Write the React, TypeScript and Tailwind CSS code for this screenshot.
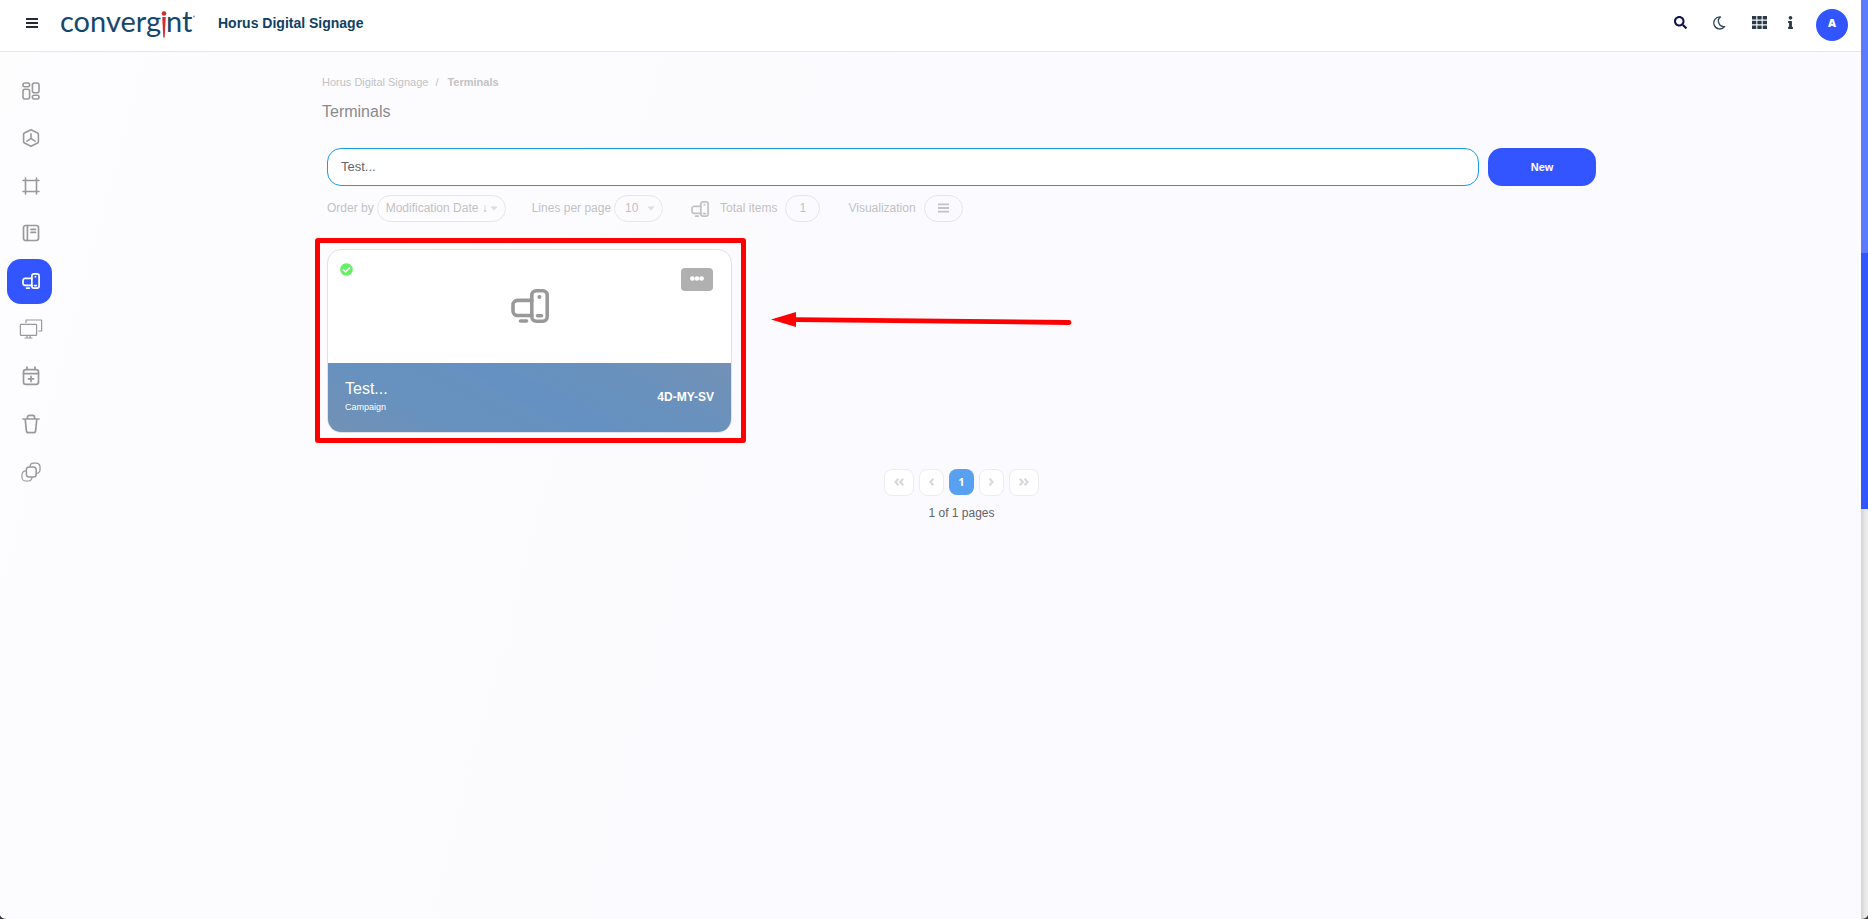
import React, { useState } from "react";
import { FaCheckCircle, FaInfo, FaSearch } from "react-icons/fa";

type IconProps = { className?: string };

interface Terminal {
  name: string;
  kind: string;
  code: string;
}

const terminals: Terminal[] = [{ name: "Test...", kind: "Campaign", code: "4D-MY-SV" }];

const stroke = {
  fill: "none",
  stroke: "currentColor",
  strokeLinecap: "round" as const,
  strokeLinejoin: "round" as const,
};

function DevicesIcon({ className }: IconProps) {
  return (
    <svg className={className} viewBox="0 0 38 34" {...stroke} strokeWidth="3.6" aria-hidden="true">
      <path d="M21 11.4H6.500a4.500 4.500 0 0 0-4.500 4.500V22a4.500 4.500 0 0 0 4.500 4.500H21" />
      <rect x="20.800" y="1.800" width="15.400" height="30.400" rx="4.400" />
      <path d="M9.500 32h6" />
      <path d="M26.400 26.800h4.200" strokeWidth="3.400" />
      <path d="M28.400 8h.02" strokeWidth="4" />
    </svg>
  );
}

function DashboardIcon({ className }: IconProps) {
  return (
    <svg className={className} viewBox="0 0 18 18" {...stroke} strokeWidth="1.600" aria-hidden="true">
      <rect x="1" y="1" width="6.600" height="3.800" rx="1.700" />
      <rect x="1" y="7.200" width="6.600" height="9.800" rx="2" />
      <rect x="10.400" y="1" width="6.600" height="9.800" rx="2" />
      <rect x="10.400" y="13.200" width="6.600" height="3.800" rx="1.700" />
    </svg>
  );
}

function HexagonIcon({ className }: IconProps) {
  return (
    <svg className={className} viewBox="0 0 18 18" {...stroke} strokeWidth="1.600" aria-hidden="true">
      <path d="M9 .8 15.600 4a1.400 1.400 0 0 1 .8 1.200v7.600a1.400 1.400 0 0 1-.8 1.200L9 17.200 2.400 14a1.400 1.400 0 0 1-.8-1.200V5.200A1.400 1.400 0 0 1 2.400 4Z" />
      <path d="M9 4.800v4.600M9 9.400l-4 2.800M9 9.400l4 2.800" />
    </svg>
  );
}

function FrameIcon({ className }: IconProps) {
  return (
    <svg className={className} viewBox="0 0 18 18" {...stroke} strokeWidth="1.600" aria-hidden="true">
      <path d="M3.500 1v16M14.500 1v16M1 3.500h16M1 14.500h16" />
    </svg>
  );
}

function NotebookIcon({ className }: IconProps) {
  return (
    <svg className={className} viewBox="0 0 18 18" {...stroke} strokeWidth="1.700" aria-hidden="true">
      <rect x="1.500" y="1.500" width="15" height="15" rx="2.200" />
      <path d="M5.400 1.500v15M9 5.400h4.400M9 8.400h4.400" />
    </svg>
  );
}

function ScreensIcon({ className }: IconProps) {
  return (
    <svg className={className} viewBox="0 0 24 20" {...stroke} strokeWidth="1.200" aria-hidden="true">
      <path d="M7 3.400V1h15.600v11h-2.800" />
      <rect x="1.400" y="5.400" width="16.200" height="11" rx=".6" />
      <path d="M8 16.600v2M11 16.600v2M6 19h7" />
    </svg>
  );
}

function CalendarPlusIcon({ className }: IconProps) {
  return (
    <svg className={className} viewBox="0 0 18 20" {...stroke} strokeWidth="1.700" aria-hidden="true">
      <rect x="1.500" y="3.600" width="15" height="14.800" rx="2.400" />
      <path d="M1.500 7.600h15M5 1.200v2.200M13 1.200v2.200M9 10.400v5M6.500 12.900h5" />
    </svg>
  );
}

function TrashIcon({ className }: IconProps) {
  return (
    <svg className={className} viewBox="0 0 18 20" {...stroke} strokeWidth="1.700" aria-hidden="true">
      <path d="M1 5h16M5.400 5V3.400a2 2 0 0 1 2-2h3.200a2 2 0 0 1 2 2V5M3.200 5l1.200 11.800a2.200 2.200 0 0 0 2.200 1.900h4.800a2.200 2.200 0 0 0 2.200-1.900L14.800 5" />
    </svg>
  );
}

function LayersIcon({ className }: IconProps) {
  return (
    <svg className={className} viewBox="0 0 20 20" {...stroke} strokeWidth="1.500" aria-hidden="true">
      <path d="M9 4.600a3.600 3.600 0 0 1 3.500-3.400h2.900A3.600 3.600 0 0 1 19 4.800v3a3.600 3.600 0 0 1-3.600 3.600" strokeWidth="1.300" />
      <rect x="5.400" y="5" width="9.800" height="10" rx="2.800" />
      <path d="M5.200 8.800a3.900 3.900 0 0 0-4.200 3.800v2.800A3.600 3.600 0 0 0 4.600 19h2.800a3.600 3.600 0 0 0 3.600-3.800" strokeWidth="1.200" />
    </svg>
  );
}

function MenuIcon({ className }: IconProps) {
  return (
    <svg className={className} viewBox="0 0 12 10" fill="currentColor" aria-hidden="true">
      <path d="M0 0h12v2H0zM0 4h12v2H0zM0 8h12v2H0z" />
    </svg>
  );
}

function MoonIcon({ className }: IconProps) {
  return (
    <svg className={className} viewBox="0 0 14 14" {...stroke} strokeWidth="1.300" aria-hidden="true">
      <path d="M8.400 1A6 6 0 1 0 12.600 10.600 5 5 0 0 1 7 7.400 5.300 5.300 0 0 1 8.400 1Z" />
    </svg>
  );
}

function GridIcon({ className }: IconProps) {
  return (
    <svg className={className} viewBox="0 0 14 12" preserveAspectRatio="none" fill="currentColor" aria-hidden="true">
      <path d="M0 0h4v3.200H0zM5 0h4v3.200H5zM10 0h4v3.200h-4zM0 4.400h4v3.200H0zM5 4.400h4v3.200H5zM10 4.400h4v3.200h-4zM0 8.800h4V12H0zM5 8.800h4V12H5zM10 8.800h4V12h-4z" />
    </svg>
  );
}

function CaretIcon({ className }: IconProps) {
  return (
    <svg className={className} viewBox="0 0 8 5" fill="currentColor" aria-hidden="true">
      <path d="M.4.500h7.200L4 4.500Z" />
    </svg>
  );
}

// Angle brackets of the pager, one or two of them, pointing left
function ChevronIcon({ double, className }: IconProps & { double?: boolean }) {
  return (
    <svg className={className} viewBox={double ? "0 0 10 8" : "0 0 5 8"} {...stroke} strokeLinecap="butt" strokeLinejoin="miter" strokeWidth="2.200" aria-hidden="true">
      <path d="M4.400.800 1.400 4l3 3.200" />
      {double && <path d="M9.200.800 6.200 4l3 3.200" />}
    </svg>
  );
}

function Logo() {
  return (
    <svg className="h-[42px] w-36 overflow-visible" viewBox="0 0 144 42" role="img" aria-label="convergint">
      <g fill="#15476b" fontFamily="Lato, sans-serif" fontSize="29">
        <text x="0" y="30">converg</text>
        <text x="106" y="30">nt</text>
      </g>
      <circle cx="104" cy="11.500" r="2.300" fill="#cf2e2e" />
      <path d="M102.200 15h3.600l-1.100 20.500h-1.400Z" fill="#cf2e2e" />
      <circle cx="134" cy="14.500" r="1" fill="#7f9db3" />
    </svg>
  );
}

const navItems = [
  { label: "Dashboard", icon: <DashboardIcon className="size-[18px]" /> },
  { label: "Models", icon: <HexagonIcon className="size-[18px]" /> },
  { label: "Layouts", icon: <FrameIcon className="size-[18px]" /> },
  { label: "Playlists", icon: <NotebookIcon className="size-[18px]" /> },
  { label: "Terminals", icon: <DevicesIcon className="h-4 w-[18px]" />, active: true },
  { label: "Screens", icon: <ScreensIcon className="h-5 w-6" /> },
  { label: "Schedules", icon: <CalendarPlusIcon className="h-5 w-[18px]" /> },
  { label: "Trash", icon: <TrashIcon className="h-5 w-[18px]" /> },
  { label: "Groups", icon: <LayersIcon className="size-5" /> },
];

function Header() {
  return (
    <header className="flex h-[52px] items-center border-b border-[#e6e6e9] bg-white pr-[13px] pb-[6px] pl-[26px]">
      <button type="button" aria-label="Menu" className="text-[#222d38]">
        <MenuIcon className="h-[10px] w-3" />
      </button>
      <a href="#" className="ml-[22px]">
        <Logo />
      </a>
      <a href="#" className="ml-[14px] text-sm font-bold text-[#0f4064]">
        Horus Digital Signage
      </a>
      <div className="ml-auto flex items-center">
        <button type="button" aria-label="Search" className="text-[#0e1250]">
          <FaSearch className="size-[13px]" />
        </button>
        <button type="button" aria-label="Dark mode" className="ml-[25px] text-[#33475b]">
          <MoonIcon className="size-[14px]" />
        </button>
        <button type="button" aria-label="Applications" className="ml-[26px] text-[#2b3a49]">
          <GridIcon className="h-[13px] w-[15px]" />
        </button>
        <button type="button" aria-label="Information" className="ml-[17px] text-[#2b3a49]">
          <FaInfo className="size-[13px]" />
        </button>
        <button
          type="button"
          className="mt-1 ml-[19px] size-8 rounded-full bg-[#3355ff] pb-[2px] font-['Open_Sans',sans-serif] text-[11px] font-extrabold text-white"
        >
          A
        </button>
      </div>
    </header>
  );
}

function Sidebar() {
  return (
    <nav className="flex h-[426px] w-[62px] shrink-0 flex-col items-start justify-between pl-[7px]">
      {navItems.map((item) => (
        <a
          key={item.label}
          href="#"
          aria-label={item.label}
          className={
            item.active
              ? "flex size-[45px] items-center justify-center rounded-[14px] bg-[#3355ff] pl-[2px] text-white"
              : "flex size-[45px] items-center justify-center pl-[2px] text-[#999999]"
          }
        >
          {item.icon}
        </a>
      ))}
    </nav>
  );
}

function FilterBar() {
  const [order, setOrder] = useState("modified");
  const [lines, setLines] = useState("10");

  return (
    <div className="mt-[9px] flex h-[27px] items-center text-xs text-[#c2c2c4]">
      <label htmlFor="order" className="pb-[2px]">
        Order by
      </label>
      <div className="relative ml-[3px]">
        <select
          id="order"
          value={order}
          onChange={(e) => setOrder(e.target.value)}
          className="h-[27px] w-[129px] appearance-none rounded-full border border-[#e6e6e9] bg-transparent pb-[2px] pl-2 outline-none"
        >
          <option value="modified">Modification Date ↓</option>
        </select>
        <CaretIcon className="pointer-events-none absolute top-[11px] right-2 h-[5px] w-2 text-[#dcdcde]" />
      </div>

      <label htmlFor="lines" className="ml-[26px] pb-[2px]">
        Lines per page
      </label>
      <div className="relative ml-[3px]">
        <select
          id="lines"
          value={lines}
          onChange={(e) => setLines(e.target.value)}
          className="h-[27px] w-[49px] appearance-none rounded-full border border-[#e6e6e9] bg-transparent pb-[2px] pl-[10px] outline-none"
        >
          <option value="10">10</option>
        </select>
        <CaretIcon className="pointer-events-none absolute top-[11px] right-2 h-[5px] w-2 text-[#dcdcde]" />
      </div>

      <DevicesIcon className="ml-7 h-4 w-[18px]" />
      <span className="ml-[11px] pb-[2px]">Total items</span>
      <span className="ml-2 flex h-[27px] w-[35px] items-center justify-center rounded-full border border-[#e6e6e9] pb-[2px]">
        1
      </span>

      <span className="ml-7 pb-[2px]">Visualization</span>
      <button
        type="button"
        aria-label="Change visualization"
        className="ml-2 flex h-[27px] w-[39px] items-center justify-center rounded-full border border-[#e6e6e9] pb-[2px]"
      >
        <MenuIcon className="h-[10px] w-[11px]" />
      </button>
    </div>
  );
}

function TerminalCard({ terminal }: { terminal: Terminal }) {
  return (
    <article className="overflow-hidden rounded-[14px] border border-[#e2e2e6] bg-white">
      <div className="flex h-[113px] items-start justify-between pt-[13px] pr-[18px] pl-3">
        <FaCheckCircle className="size-[13px] text-[#66f066]" />
        <DevicesIcon className="mt-[26px] ml-[25px] h-[34px] w-[38px] text-[#999999]" />
        <button
          type="button"
          aria-label="Options"
          className="mt-[5px] flex h-[23px] w-8 items-center justify-center rounded-[4px] bg-[#b0b0b0] text-white"
        >
          <svg className="mb-[2px] h-[5px] w-[14px]" viewBox="0 0 14 5" fill="currentColor" aria-hidden="true">
            <circle cx="2.400" cy="2.500" r="2.300" />
            <circle cx="7" cy="2.500" r="2.300" />
            <circle cx="11.600" cy="2.500" r="2.300" />
          </svg>
        </button>
      </div>
      <div className="flex h-[69px] items-center justify-between bg-[linear-gradient(28deg,#7391b5_0%,#6891be_24%,#6691c0_45%,#6490c3_52%,#6691c0_58%,#6991bd_75%,#7391b5_100%)] px-[17px] pb-[2px] text-white">
        <div>
          <h2 className="text-base leading-5">{terminal.name}</h2>
          <p className="text-[9px] leading-4">{terminal.kind}</p>
        </div>
        <span className="text-xs font-bold">{terminal.code}</span>
      </div>
    </article>
  );
}

function Pagination() {
  const button = "flex h-[27px] items-center justify-center rounded-lg border border-[#ededf1] bg-white pb-[2px] text-[#d8d8da]";

  return (
    <div className="mt-9 flex flex-col items-center text-xs text-[#606468]">
      <div className="flex gap-[5px]">
        <button type="button" aria-label="First page" className={`${button} w-[30px]`}>
          <ChevronIcon double className="h-2 w-[10px]" />
        </button>
        <button type="button" aria-label="Previous page" className={`${button} w-[25px]`}>
          <ChevronIcon className="h-2 w-[5px]" />
        </button>
        <button
          type="button"
          className="h-[26px] w-[25px] rounded-lg bg-[#58a0f0] font-['Open_Sans',sans-serif] text-[11px] font-bold text-white"
        >
          1
        </button>
        <button type="button" aria-label="Next page" className={`${button} w-[25px]`}>
          <ChevronIcon className="h-2 w-[5px] rotate-180" />
        </button>
        <button type="button" aria-label="Last page" className={`${button} w-[30px]`}>
          <ChevronIcon double className="h-2 w-[10px] rotate-180" />
        </button>
      </div>
      <p className="mt-[9px] leading-4">1 of 1 pages</p>
    </div>
  );
}

export default function App() {
  const [search, setSearch] = useState("Test...");

  return (
    <div className="relative flex min-h-screen bg-[linear-gradient(105deg,#fdfdfe_0%,#fcfcfe_25%,#fafaff_50%,#fafaff_100%)] font-['Liberation_Sans',Arial,sans-serif]">
      <div className="min-w-0 flex-1">
        <Header />
        <div className="flex pt-4">
          <Sidebar />
          <main className="min-w-0 flex-1 px-5 pt-[6px]">
            <div className="mx-auto max-w-[1279px]">
              <nav aria-label="Breadcrumb" className="flex text-[11px] leading-4 text-[#c2c2c4]">
                <a href="#">Horus Digital Signage</a>
                <span className="mx-[7px]">/</span>
                <span className="ml-[2px] font-bold">Terminals</span>
              </nav>
              <h1 className="mt-[10px] text-base leading-6 text-[#8a8a8c]">Terminals</h1>

              <div className="mt-6 px-[5px]">
                <div className="flex gap-[9px]">
                  <input
                    type="text"
                    aria-label="Search terminals"
                    value={search}
                    onChange={(e) => setSearch(e.target.value)}
                    className="h-[38px] min-w-0 flex-1 rounded-[14px] border border-[#1a9aea] bg-white px-[13px] pb-[2px] text-[13px] text-[#666666] outline-none"
                  />
                  <button type="button" className="h-[38px] w-[108px] rounded-[14px] bg-[#3355ff] text-[11px] font-bold text-white">
                    New
                  </button>
                </div>

                <FilterBar />

                <div className="mt-[27px] grid grid-cols-3 gap-x-[27px]">
                  {terminals.map((terminal) => (
                    <div key={terminal.code} className="relative">
                      <TerminalCard terminal={terminal} />
                      {/* Highlight frame and pointer */}
                      <div className="pointer-events-none absolute -top-[11px] -right-[14px] -bottom-[10px] -left-3 rounded-[3px] border-[5px] border-[#ff0000]" />
                      <svg
                        className="pointer-events-none absolute top-[62px] left-full ml-[39px] h-[18px] w-[302px]"
                        viewBox="0 0 302 18"
                        aria-hidden="true"
                      >
                        <path d="M0 8.500 25 1v15Z" fill="#ff0000" />
                        <path d="M24 8.600 298 11.500" stroke="#ff0000" strokeWidth="4.800" strokeLinecap="round" />
                      </svg>
                    </div>
                  ))}
                </div>
              </div>

              <Pagination />
            </div>
          </main>
        </div>
      </div>

      {/* Scroll track */}
      <div className="flex w-[7px] shrink-0 flex-col">
        <div className="h-[253px] bg-[#5c7aff]" />
        <div className="h-64 bg-[#3355ff]" />
        <div className="flex-1 bg-linear-to-r from-[#d2d2d2] via-[#e6e6e6] to-[#ededed]" />
      </div>

      {/* Rounded window corners */}
      <svg className="absolute bottom-0 left-0 h-1 w-[6px]" viewBox="0 0 6 4" aria-hidden="true">
        <path d="M0 0q1 3.500 6 4H0Z" fill="#33333b" />
      </svg>
      <svg className="absolute right-0 bottom-0 h-1 w-[6px]" viewBox="0 0 6 4" aria-hidden="true">
        <path d="M6 0Q5 3.500 0 4h6Z" fill="#33333b" />
      </svg>
    </div>
  );
}
